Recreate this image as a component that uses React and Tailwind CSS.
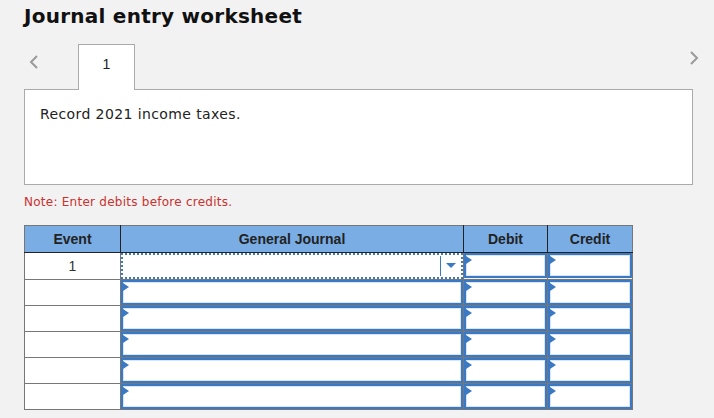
import React from "react";

const rows = [0, 1, 2, 3, 4, 5];

function Marker() {
  return (
    <span className="absolute left-0 top-[1px] w-0 h-0 border-y-[4px] border-y-transparent border-l-[6px] border-l-[#3b79c2]" />
  );
}

function InputCell({ marker = true }) {
  return (
    <div className="relative h-[25px] border-2 border-[#3b79c2] bg-white shadow-[inset_0_0_0_1px_#d6e5f7]">
      {marker && <Marker />}
    </div>
  );
}

function Chevron({ dir }) {
  return (
    <svg width="12" height="16" viewBox="0 0 12 16" className="block">
      <path
        d={dir === "left" ? "M9 2 L3 8 L9 14" : "M3 2 L9 8 L3 14"}
        fill="none"
        stroke="#9a9a9a"
        strokeWidth="2"
      />
    </svg>
  );
}

export default function App() {
  return (
    <div className="min-h-[418px] w-[714px] bg-[#f2f2f2] font-['Verdana','DejaVu_Sans',sans-serif] text-[#111]">
      {/* Title */}
      <h1 className="pl-6 pt-[4px] h-[44px] text-[20px] font-bold leading-[24px] tracking-[0.25px]">
        Journal entry worksheet
      </h1>

      {/* Tabs */}
      <div className="flex items-start h-[45px]">
        <div className="ml-[28px] mt-[10px]">
          <Chevron dir="left" />
        </div>
        <div className="relative z-10 ml-[38px] w-[57px] h-[46px] border border-b-0 border-[#aaa] bg-white text-center pt-[9px] font-['Liberation_Sans',Arial,sans-serif] text-[14px] text-[#222]">
          1
        </div>
        <div className="ml-auto mr-[14px] mt-[6px]">
          <Chevron dir="right" />
        </div>
      </div>

      {/* Question panel */}
      <div className="ml-6 mr-[21px] h-[96px] border border-[#aaa] bg-white pl-[15px] pt-[14px] text-[14px] tracking-[0.4px] text-[#222]">
        Record 2021 income taxes.
      </div>

      {/* Note */}
      <p className="ml-6 mt-[8px] text-[12px] tracking-[0.25px] text-[#c8312f]">
        Note: Enter debits before credits.
      </p>

      {/* Journal table */}
      <table className="ml-6 mt-[14px] border-collapse border border-[#777] font-['Liberation_Sans',Arial,sans-serif] text-[14px]">
        <thead>
          <tr className="h-[27px] bg-[#79ade4] text-[#222] font-bold">
            <th className="w-[96px] p-0 border-b border-r border-[#222] font-bold">Event</th>
            <th className="w-[343px] p-0 border-b border-r border-[#222] font-bold">General Journal</th>
            <th className="w-[84px] p-0 border-b border-r border-[#222] font-bold">Debit</th>
            <th className="w-[85px] p-0 border-b border-[#222] font-bold">Credit</th>
          </tr>
        </thead>
        <tbody>
          {rows.map((r) => (
            <tr key={r} className="h-[26px]">
              <td className="p-0 border border-[#777] bg-white text-center text-[#333] align-middle">
                {r === 0 ? "1" : ""}
              </td>
              <td className="p-0 border border-[#777] align-top">
                {r === 0 ? (
                  <div className="relative h-[26px] border-2 border-dotted border-[#3b79c2] bg-white">
                    <span className="absolute right-[20px] top-[1px] h-[20px] w-[1px] bg-[#3b79c2]" />
                    <span className="absolute right-[5px] top-[8px] w-0 h-0 border-x-[5px] border-x-transparent border-t-[5px] border-t-[#3b79c2]" />
                  </div>
                ) : (
                  <InputCell />
                )}
              </td>
              <td className="p-0 border border-[#777] align-top">
                <InputCell />
              </td>
              <td className="p-0 border border-[#777] align-top">
                <InputCell />
              </td>
            </tr>
          ))}
        </tbody>
      </table>
    </div>
  );
}
